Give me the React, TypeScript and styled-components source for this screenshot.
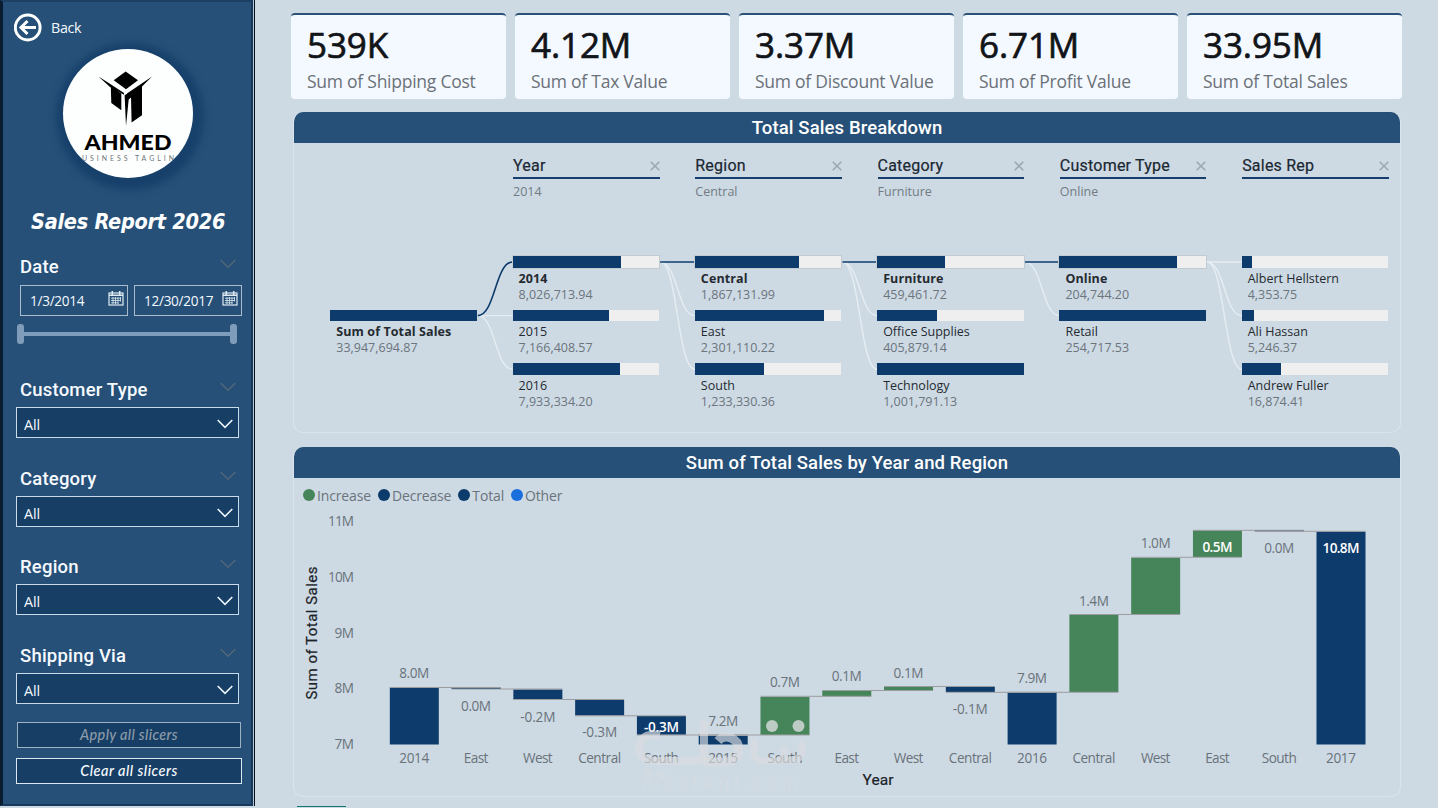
import React from "react";
import styled, { createGlobalStyle } from "styled-components";

const SEGOE = `"Open Sans", "Noto Sans", sans-serif`;
const DIN = `Roboto, "Liberation Sans", sans-serif`;
const NAVY = "#0d3c6c";

const GlobalStyle = createGlobalStyle`
  * { box-sizing: border-box; }
  html, body { margin: 0; padding: 0; }
  body { background: #cddae4; overflow: hidden; font-family: ${SEGOE}; }
  svg { display: block; }
`;

const Page = styled.div`
  display: flex;
  width: 1438px;
  height: 808px;
  overflow: hidden;
  background: #cddae4;
`;

/* ---------- sidebar ---------- */
const Sidebar = styled.aside`
  width: 253px;
  height: 806px;
  flex: none;
  background: #265077;
  border: 2px solid #173a5c;
  border-left: 3px solid #0a1d30;
  border-top-color: #1d3f62;
  box-shadow: 1px 0 0 #b9c9d6, 2px 0 0 #06121f;
  padding: 10px 0 0 11px;
  display: flex;
  flex-direction: column;
`;

const BackRow = styled.div`
  display: flex;
  align-items: center;
  gap: 8px;
  height: 29px;
  padding-top: 1px;
  color: #f4f9ff;
  font-size: 14.3px;
  letter-spacing: -0.35px;
`;

const Logo = styled.div`
  width: 130px;
  height: 129px;
  margin: 8px 0 0 49px;
  border-radius: 50%;
  background: #fdfffe;
  box-shadow: 2px 3px 7px 9px #17416b;
  overflow: hidden;
`;

const ReportTitle = styled.h1`
  margin: 28px 0 0 17px;
  height: 32px;
  color: #fff;
  font: italic bold 21.5px/32px "DejaVu Sans Condensed", "DejaVu Sans", sans-serif;
  font-stretch: condensed;
  letter-spacing: -0.25px;
  white-space: nowrap;
`;

const Slicer = styled.section<{ $top: number }>`
  margin-top: ${(p) => p.$top}px;
  width: 228px;
`;

const SlicerHead = styled.div`
  display: flex;
  justify-content: space-between;
  height: 26px;
  padding: 0 6px 0 6px;
  color: #f6faff;
  font: 500 18.5px/26px ${DIN};
  letter-spacing: 0.2px;
`;

const ChevronBox = styled.span`
  padding-top: 5px;
`;

const Select = styled.div`
  display: flex;
  align-items: center;
  justify-content: space-between;
  width: 223px;
  height: 31px;
  margin: 4px 0 0 2px;
  padding: 3px 5px 0 7px;
  background: #173f65;
  border: 1px solid #c9dbe8;
  color: #f4f9ff;
  font-size: 14.3px;
  letter-spacing: -0.1px;
`;

const DateRow = styled.div`
  display: flex;
  gap: 6px;
  margin: 5px 0 0 6px;
`;

const DateInput = styled.div`
  display: flex;
  align-items: center;
  justify-content: space-between;
  width: 108px;
  height: 31px;
  padding: 0 3px 0 9px;
  border: 1px solid #a9bdcd;
  color: #f4f9ff;
  font-size: 13.6px;
  letter-spacing: -0.3px;
  svg { margin-top: -4px; }
`;

const Slider = styled.div`
  display: flex;
  align-items: center;
  width: 220px;
  height: 20px;
  margin: 8px 0 0 3px;
`;

const Handle = styled.span`
  width: 7px;
  height: 20px;
  border-radius: 3px;
  background: #7f9dba;
`;

const Track = styled.span`
  flex: 1;
  height: 4px;
  background: #7f9dba;
`;

const SlicerButton = styled.button<{ $muted?: boolean }>`
  width: ${(p) => (p.$muted ? 224 : 226)}px;
  height: 26px;
  margin: ${(p) => (p.$muted ? "18px 0 0 3px" : "10px 0 0 2px")};
  padding: 0;
  background: #173f65;
  border: 1px solid ${(p) => (p.$muted ? "#9db3c4" : "#dbe8f2")};
  color: ${(p) => (p.$muted ? "#8b9baa" : "#f8fbff")};
  font: italic 500 14.5px/24px Lato, sans-serif;
  letter-spacing: ${(p) => (p.$muted ? 0.35 : 0.5)}px;
`;

/* ---------- main area ---------- */
const Main = styled.main`
  display: flex;
  flex-direction: column;
  flex: 1;
  padding: 13px 37px 0 38px;
`;

const Cards = styled.div`
  display: flex;
  gap: 9px;
`;

const Card = styled.div`
  width: 215px;
  height: 86px;
  padding: 7px 0 0 16px;
  background: #f4f9ff;
  border-top: 2px solid #2a5178;
  border-radius: 4px;
  white-space: nowrap;
`;

const CardValue = styled.div`
  height: 46px;
  color: #111418;
  font: 400 35px/46px ${SEGOE};
  letter-spacing: -0.1px;
  -webkit-text-stroke: 0.7px #111418;
`;

const CardLabel = styled.div`
  color: #6b7178;
  font-size: 17.5px;
  line-height: 27px;
  letter-spacing: -0.25px;
`;

const Panel = styled.section<{ $top: number; $height: number }>`
  width: 1108px;
  height: ${(p) => p.$height}px;
  margin: ${(p) => p.$top}px 0 0 2px;
  border: 1px solid #d9e4ec;
  border-top: 0;
  border-radius: 10px;
  overflow: hidden;
`;

const PanelTitle = styled.h2`
  margin: 0;
  height: 31px;
  padding-top: 1px;
  background: #265077;
  color: #fff;
  text-align: center;
  font: 500 18.5px/30px ${DIN};
  letter-spacing: 0.12px;
`;

const Levels = styled.div`
  display: flex;
  gap: 35.7px;
  padding: 11px 0 0 219px;
  height: 113px;
`;

const Level = styled.div`
  width: 146.6px;
`;

const LevelHead = styled.div`
  display: flex;
  justify-content: space-between;
  align-items: center;
  height: 25px;
  border-bottom: 2px solid #173f6d;
  color: #1b2732;
  font: 400 16px/22px ${DIN};
  letter-spacing: 0.22px;
  -webkit-text-stroke: 0.2px #1b2732;
`;

const LevelValue = styled.div`
  color: #737b83;
  font-size: 12.5px;
  line-height: 25px;
`;

const Tree = styled.div`
  display: grid;
  grid-template: 1fr / 1fr;
  > * { grid-area: 1 / 1; }
`;

const TreeColumns = styled.div`
  display: flex;
  gap: 35.7px;
  padding-left: 36.3px;
`;

const TreeColumn = styled.div<{ $offset?: number }>`
  width: 146.6px;
  padding-top: ${(p) => p.$offset ?? 0}px;
`;

const Node = styled.div`
  height: 53.6px;
`;

const Bar = styled.div<{ $active?: boolean }>`
  height: 11.5px;
  background: #efefef;
  box-shadow: ${(p) => (p.$active ? "0 0 0 1px #c3cbd1" : "none")};
`;

const Fill = styled.div`
  height: 100%;
  background: ${NAVY};
`;

const NodeName = styled.div<{ $bold?: boolean }>`
  padding: 3px 0 0 6px;
  height: 18px;
  color: #252a30;
  font-size: 12.5px;
  line-height: 16px;
  font-weight: ${(p) => (p.$bold ? 700 : 400)};
  letter-spacing: ${(p) => (p.$bold ? 0.1 : 0)}px;
  white-space: nowrap;
`;

const NodeValue = styled.div`
  padding-left: 6px;
  height: 16px;
  color: #6c747c;
  font-size: 12.5px;
  line-height: 17px;
`;

const Legend = styled.div`
  display: flex;
  gap: 7px;
  height: 26px;
  padding: 8px 0 0 9px;
`;

const LegendItem = styled.span`
  display: flex;
  align-items: center;
  gap: 2px;
  height: 18px;
  color: #6b737b;
  font-size: 14px;
  letter-spacing: -0.15px;
`;

const Dot = styled.i<{ $color: string }>`
  width: 12px;
  height: 12px;
  border-radius: 50%;
  background: ${(p) => p.$color};
`;

const NextVisual = styled.div`
  width: 49px;
  height: 1px;
  margin: 9px 0 0 6px;
  background: #11776f;
`;

/* ---------- icons ---------- */
const BackIcon = () => (
  <svg width="29" height="29" viewBox="0 0 29 29" fill="none" stroke="#fff">
    <circle cx="13.700" cy="14.5" r="12.4" strokeWidth="3" />
    <path d="M22 14.5H7M13.5 8 7 14.5l6.5 6.5" strokeWidth="3" />
  </svg>
);

const Chevron = ({ color, width }: { color: string; width: number }) => (
  <svg width={16} height={10} viewBox="0 0 16 10" fill="none" stroke={color} strokeWidth={width}>
    <path d="M.7 1 8 8.3 15.3 1" />
  </svg>
);

const Calendar = () => (
  <svg width="16" height="15" viewBox="0 0 16 15" fill="none" stroke="#dfeaf3">
    <rect x="1" y="2" width="14" height="12" strokeWidth="1.2" />
    <path d="M1 4.3h14M4.3 0v3.5M11.7 0v3.5" strokeWidth="1.5" />
    <path d="M3 7.2h10M3 9.5h10M3 11.8h7.5M5 6v7M7.5 6v7M10 6v7M12.5 6v4.5" strokeWidth=".8" />
  </svg>
);

const Close = () => (
  <svg width="10" height="10" viewBox="0 0 10 10" stroke="#9da9b2" strokeWidth="1.6">
    <path d="M.7.7l8.6 8.6M9.3.7.7 9.3" />
  </svg>
);

const LogoArt = () => (
  <svg width="130" height="129" viewBox="63 49 130 129">
    <g fill="#000">
      <path d="M125.7 71.5 138 80.2 126 89.3 113.7 80.2z" />
      <path d="M98.5 76.5 111 84.500 124 93v1.8L110 87z" />
      <path d="M152 76.5 127 93.5l.3 1.5L142 86.5z" />
      <path d="M110.8 86.3 121.3 93.5v16.8L111.3 103z" />
      <path d="M124.6 95.2 142 84.7v30.6L131.6 122.6 131 97.5 128.7 99.5 126 126z" />
    </g>
    <text x="84.5" y="150" fontFamily="Lato, sans-serif" fontWeight="900" fontSize="21" textLength="87" lengthAdjust="spacingAndGlyphs">AHMED</text>
    <text x="82" y="160.500" fontFamily="Lato, sans-serif" fontSize="7" fill="#70757b" textLength="92">USINESS TAGLIN</text>
  </svg>
);

/* ---------- data ---------- */
const cards = [
  ["539K", "Sum of Shipping Cost"],
  ["4.12M", "Sum of Tax Value"],
  ["3.37M", "Sum of Discount Value"],
  ["6.71M", "Sum of Profit Value"],
  ["33.95M", "Sum of Total Sales"],
];

const levels = [
  ["Year", "2014"],
  ["Region", "Central"],
  ["Category", "Furniture"],
  ["Customer Type", "Online"],
  ["Sales Rep", ""],
];

type TreeNode = { name: string; value: string; share: number; active?: boolean };
const columns: TreeNode[][] = [
  [{ name: "Sum of Total Sales", value: "33,947,694.87", share: 100, active: true }],
  [
    { name: "2014", value: "8,026,713.94", share: 74, active: true },
    { name: "2015", value: "7,166,408.57", share: 66 },
    { name: "2016", value: "7,933,334.20", share: 73 },
  ],
  [
    { name: "Central", value: "1,867,131.99", share: 71, active: true },
    { name: "East", value: "2,301,110.22", share: 88 },
    { name: "South", value: "1,233,330.36", share: 47 },
  ],
  [
    { name: "Furniture", value: "459,461.72", share: 46, active: true },
    { name: "Office Supplies", value: "405,879.14", share: 40.5 },
    { name: "Technology", value: "1,001,791.13", share: 100 },
  ],
  [
    { name: "Online", value: "204,744.20", share: 80.5, active: true },
    { name: "Retail", value: "254,717.53", share: 100 },
  ],
  [
    { name: "Albert Hellstern", value: "4,353.75", share: 7 },
    { name: "Ali Hassan", value: "5,246.37", share: 8.3 },
    { name: "Andrew Fuller", value: "16,874.41", share: 27 },
  ],
];

const links = [
  { col: 0, from: 1, to: [2, 1, 0], on: 0 },
  { col: 1, from: 0, to: [2, 1, 0], on: 0 },
  { col: 2, from: 0, to: [2, 1, 0], on: 0 },
  { col: 3, from: 0, to: [1, 0], on: 0 },
  { col: 4, from: 0, to: [2, 1, 0], on: -1 },
];

const Connectors = () => (
  <svg width="1106" height="165" fill="none">
    {links.map((l) =>
      l.to.map((t) => {
        const x1 = 36.3 + l.col * 182.3 + 147.5;
        const x2 = 36.3 + (l.col + 1) * 182.3;
        const y1 = 6 + l.from * 53.6;
        const y2 = 6 + t * 53.6;
        const m = (x1 + x2) / 2;
        const on = t === l.on;
        return (
          <path
            key={`${l.col}-${t}`}
            d={`M${x1} ${y1}C${m} ${y1} ${m} ${y2} ${x2} ${y2}`}
            stroke={on ? NAVY : "#e6edf2"}
            strokeWidth={on ? 1.6 : 1.4}
          />
        );
      })
    )}
  </svg>
);

type Step = {
  name: string; label: string; top: number; bottom: number; labelY: number;
  up?: boolean; inside?: boolean; link?: number;
};
const steps: Step[] = [
  { name: "2014", label: "8.0M", top: 687.5, bottom: 744.5, labelY: 673, link: 687.5 },
  { name: "East", label: "0.0M", top: 687.5, bottom: 689, labelY: 706, link: 689 },
  { name: "West", label: "-0.2M", top: 689.5, bottom: 699.5, labelY: 717, link: 699.5 },
  { name: "Central", label: "-0.3M", top: 700, bottom: 715.5, labelY: 732, link: 715.8 },
  { name: "South", label: "-0.3M", top: 716, bottom: 734.8, labelY: 727, inside: true, link: 735 },
  { name: "2015", label: "7.2M", top: 735.8, bottom: 744.5, labelY: 721, link: 735 },
  { name: "South", label: "0.7M", top: 697, bottom: 735, labelY: 682, up: true, link: 696.3 },
  { name: "East", label: "0.1M", top: 690.7, bottom: 696.3, labelY: 676, up: true, link: 690.5 },
  { name: "West", label: "0.1M", top: 686.7, bottom: 690, labelY: 673, up: true, link: 686.5 },
  { name: "Central", label: "-0.1M", top: 686.7, bottom: 692, labelY: 709, link: 692.3 },
  { name: "2016", label: "7.9M", top: 692.8, bottom: 744.5, labelY: 678, link: 692.3 },
  { name: "Central", label: "1.4M", top: 615, bottom: 692, labelY: 601, up: true, link: 614.5 },
  { name: "West", label: "1.0M", top: 558, bottom: 614, labelY: 543, up: true, link: 557.3 },
  { name: "East", label: "0.5M", top: 530.5, bottom: 557, labelY: 547, up: true, inside: true, link: 530.3 },
  { name: "South", label: "0.0M", top: 530, bottom: 531.2, labelY: 548, link: 531.3 },
  { name: "2017", label: "10.8M", top: 531.7, bottom: 744.5, labelY: 548, inside: true },
];
const centre = (i: number) => 414.3 + i * 61.78;
const labelWidth: Record<string, number> = { "5": 35, "4": 30 };
const nameWidth: Record<string, number> = {
  East: 24.5, West: 29.5, Central: 43, South: 35, "2014": 30, "2015": 30, "2016": 30, "2017": 30,
};

const Watermark = () => (
  <g fill="none" stroke="#d9dbde" strokeOpacity="0.68">
    <path d="M660 735q-19-3-21 13q0 14 20 13h38q7-1 7-9v-31" strokeWidth="8" />
    <path d="M718 741q5-6 13-3q10 4 7 17q-3 7-14 7h-20" strokeWidth="9" />
    <path d="M754 739v14q0 8 10 8h12q8 0 8-9v-6M784 760h10q8-1 8-13v-6" strokeWidth="7" />
    <g fill="#d9dcdf" fillOpacity=".8" stroke="none">
      <circle cx="772" cy="726" r="6" />
      <circle cx="798.500" cy="726" r="6" />
      <circle cx="649" cy="774" r="4.500" fillOpacity=".5" />
      <circle cx="661" cy="774" r="4.500" fillOpacity=".5" />
      <text x="642" y="789" fontFamily="Lato, sans-serif" fontWeight="400" fontSize="20" fillOpacity=".55" textLength="156">mostaql.com</text>
    </g>
  </g>
);

const Waterfall = () => (
  <svg width="1106" height="292" viewBox="294 504 1106 292" fontFamily={SEGOE} fontSize="13.600" fill="#6a727a">
    {["11M", "10M", "9M", "8M", "7M"].map((t, i) => (
      <text key={t} x="354" y={526 + i * 55.8} textAnchor="end" textLength={t.length === 3 ? 26 : 19.5}>{t}</text>
    ))}
    <text transform="translate(317 633) rotate(-90)" textAnchor="middle" fontFamily={DIN} fontSize="15" fill="#1b2228" stroke="#1b2228" strokeWidth=".2" textLength="133">Sum of Total Sales</text>
    {steps.map((s, i) => (
      <rect key={i} x={centre(i) - 24.5} width="49" y={s.top} height={s.bottom - s.top} fill={s.up ? "#46855a" : NAVY} />
    ))}
    {steps.map((s, i) => s.link !== undefined && (
      <path key={i} d={`M${centre(i) - 24.5} ${s.link}H${centre(i + 1) + 24.5}`} stroke="#9b9c9f" strokeWidth="1" />
    ))}
    {steps.map((s, i) => (
      <g key={i} textAnchor="middle">
        <text
          x={centre(i)} y={s.labelY + 5}
          fill={s.inside ? "#fff" : undefined} fontWeight={s.inside ? 600 : 400}
          textLength={s.label === "10.8M" ? 37 : labelWidth[String(s.label.length)]}
        >{s.label}</text>
        <text x={centre(i)} y="763" textLength={nameWidth[s.name]}>{s.name}</text>
      </g>
    ))}
    <text x="878" y="785" textAnchor="middle" fontFamily={DIN} fontSize="15.500" fill="#1b2228" stroke="#1b2228" strokeWidth=".2" textLength="31">Year</text>
    <Watermark />
  </svg>
);

const Dropdown = ({ title, top }: { title: string; top: number }) => (
  <Slicer $top={top}>
    <SlicerHead>{title}<ChevronBox><Chevron color="#53687a" width={1.3} /></ChevronBox></SlicerHead>
    <Select>All<Chevron color="#eef6fd" width={1.6} /></Select>
  </Slicer>
);

export default function App() {
  return (
    <Page>
      <GlobalStyle />
      <Sidebar>
        <BackRow><BackIcon />Back</BackRow>
        <Logo><LogoArt /></Logo>
        <ReportTitle>Sales Report 2026</ReportTitle>
        <Slicer $top={16}>
          <SlicerHead>Date<ChevronBox><Chevron color="#53687a" width={1.3} /></ChevronBox></SlicerHead>
          <DateRow>
            <DateInput>1/3/2014<Calendar /></DateInput>
            <DateInput>12/30/2017<Calendar /></DateInput>
          </DateRow>
          <Slider><Handle /><Track /><Handle /></Slider>
        </Slicer>
        <Dropdown title="Customer Type" top={33} />
        <Dropdown title="Category" top={28} />
        <Dropdown title="Region" top={27} />
        <Dropdown title="Shipping Via" top={28} />
        <SlicerButton $muted>Apply all slicers</SlicerButton>
        <SlicerButton>Clear all slicers</SlicerButton>
      </Sidebar>
      <Main>
        <Cards>
          {cards.map(([value, label]) => (
            <Card key={label}>
              <CardValue>{value}</CardValue>
              <CardLabel>{label}</CardLabel>
            </Card>
          ))}
        </Cards>
        <Panel $top={13} $height={321}>
          <PanelTitle>Total Sales Breakdown</PanelTitle>
          <Levels>
            {levels.map(([name, value]) => (
              <Level key={name}>
                <LevelHead>{name}<Close /></LevelHead>
                <LevelValue>{value}</LevelValue>
              </Level>
            ))}
          </Levels>
          <Tree>
            <Connectors />
            <TreeColumns>
              {columns.map((nodes, c) => (
                <TreeColumn key={c} $offset={c === 0 ? 53.6 : 0}>
                  {nodes.map((n) => (
                    <Node key={n.name}>
                      <Bar $active={n.active && c > 0}><Fill style={{ width: `${n.share}%` }} /></Bar>
                      <NodeName $bold={n.active}>{n.name}</NodeName>
                      <NodeValue>{n.value}</NodeValue>
                    </Node>
                  ))}
                </TreeColumn>
              ))}
            </TreeColumns>
          </Tree>
        </Panel>
        <Panel $top={14} $height={350}>
          <PanelTitle>Sum of Total Sales by Year and Region</PanelTitle>
          <Legend>
            <LegendItem><Dot $color="#46855a" />Increase</LegendItem>
            <LegendItem><Dot $color={NAVY} />Decrease</LegendItem>
            <LegendItem><Dot $color={NAVY} />Total</LegendItem>
            <LegendItem><Dot $color="#1a6fdc" />Other</LegendItem>
          </Legend>
          <Waterfall />
        </Panel>
        <NextVisual />
      </Main>
    </Page>
  );
}
